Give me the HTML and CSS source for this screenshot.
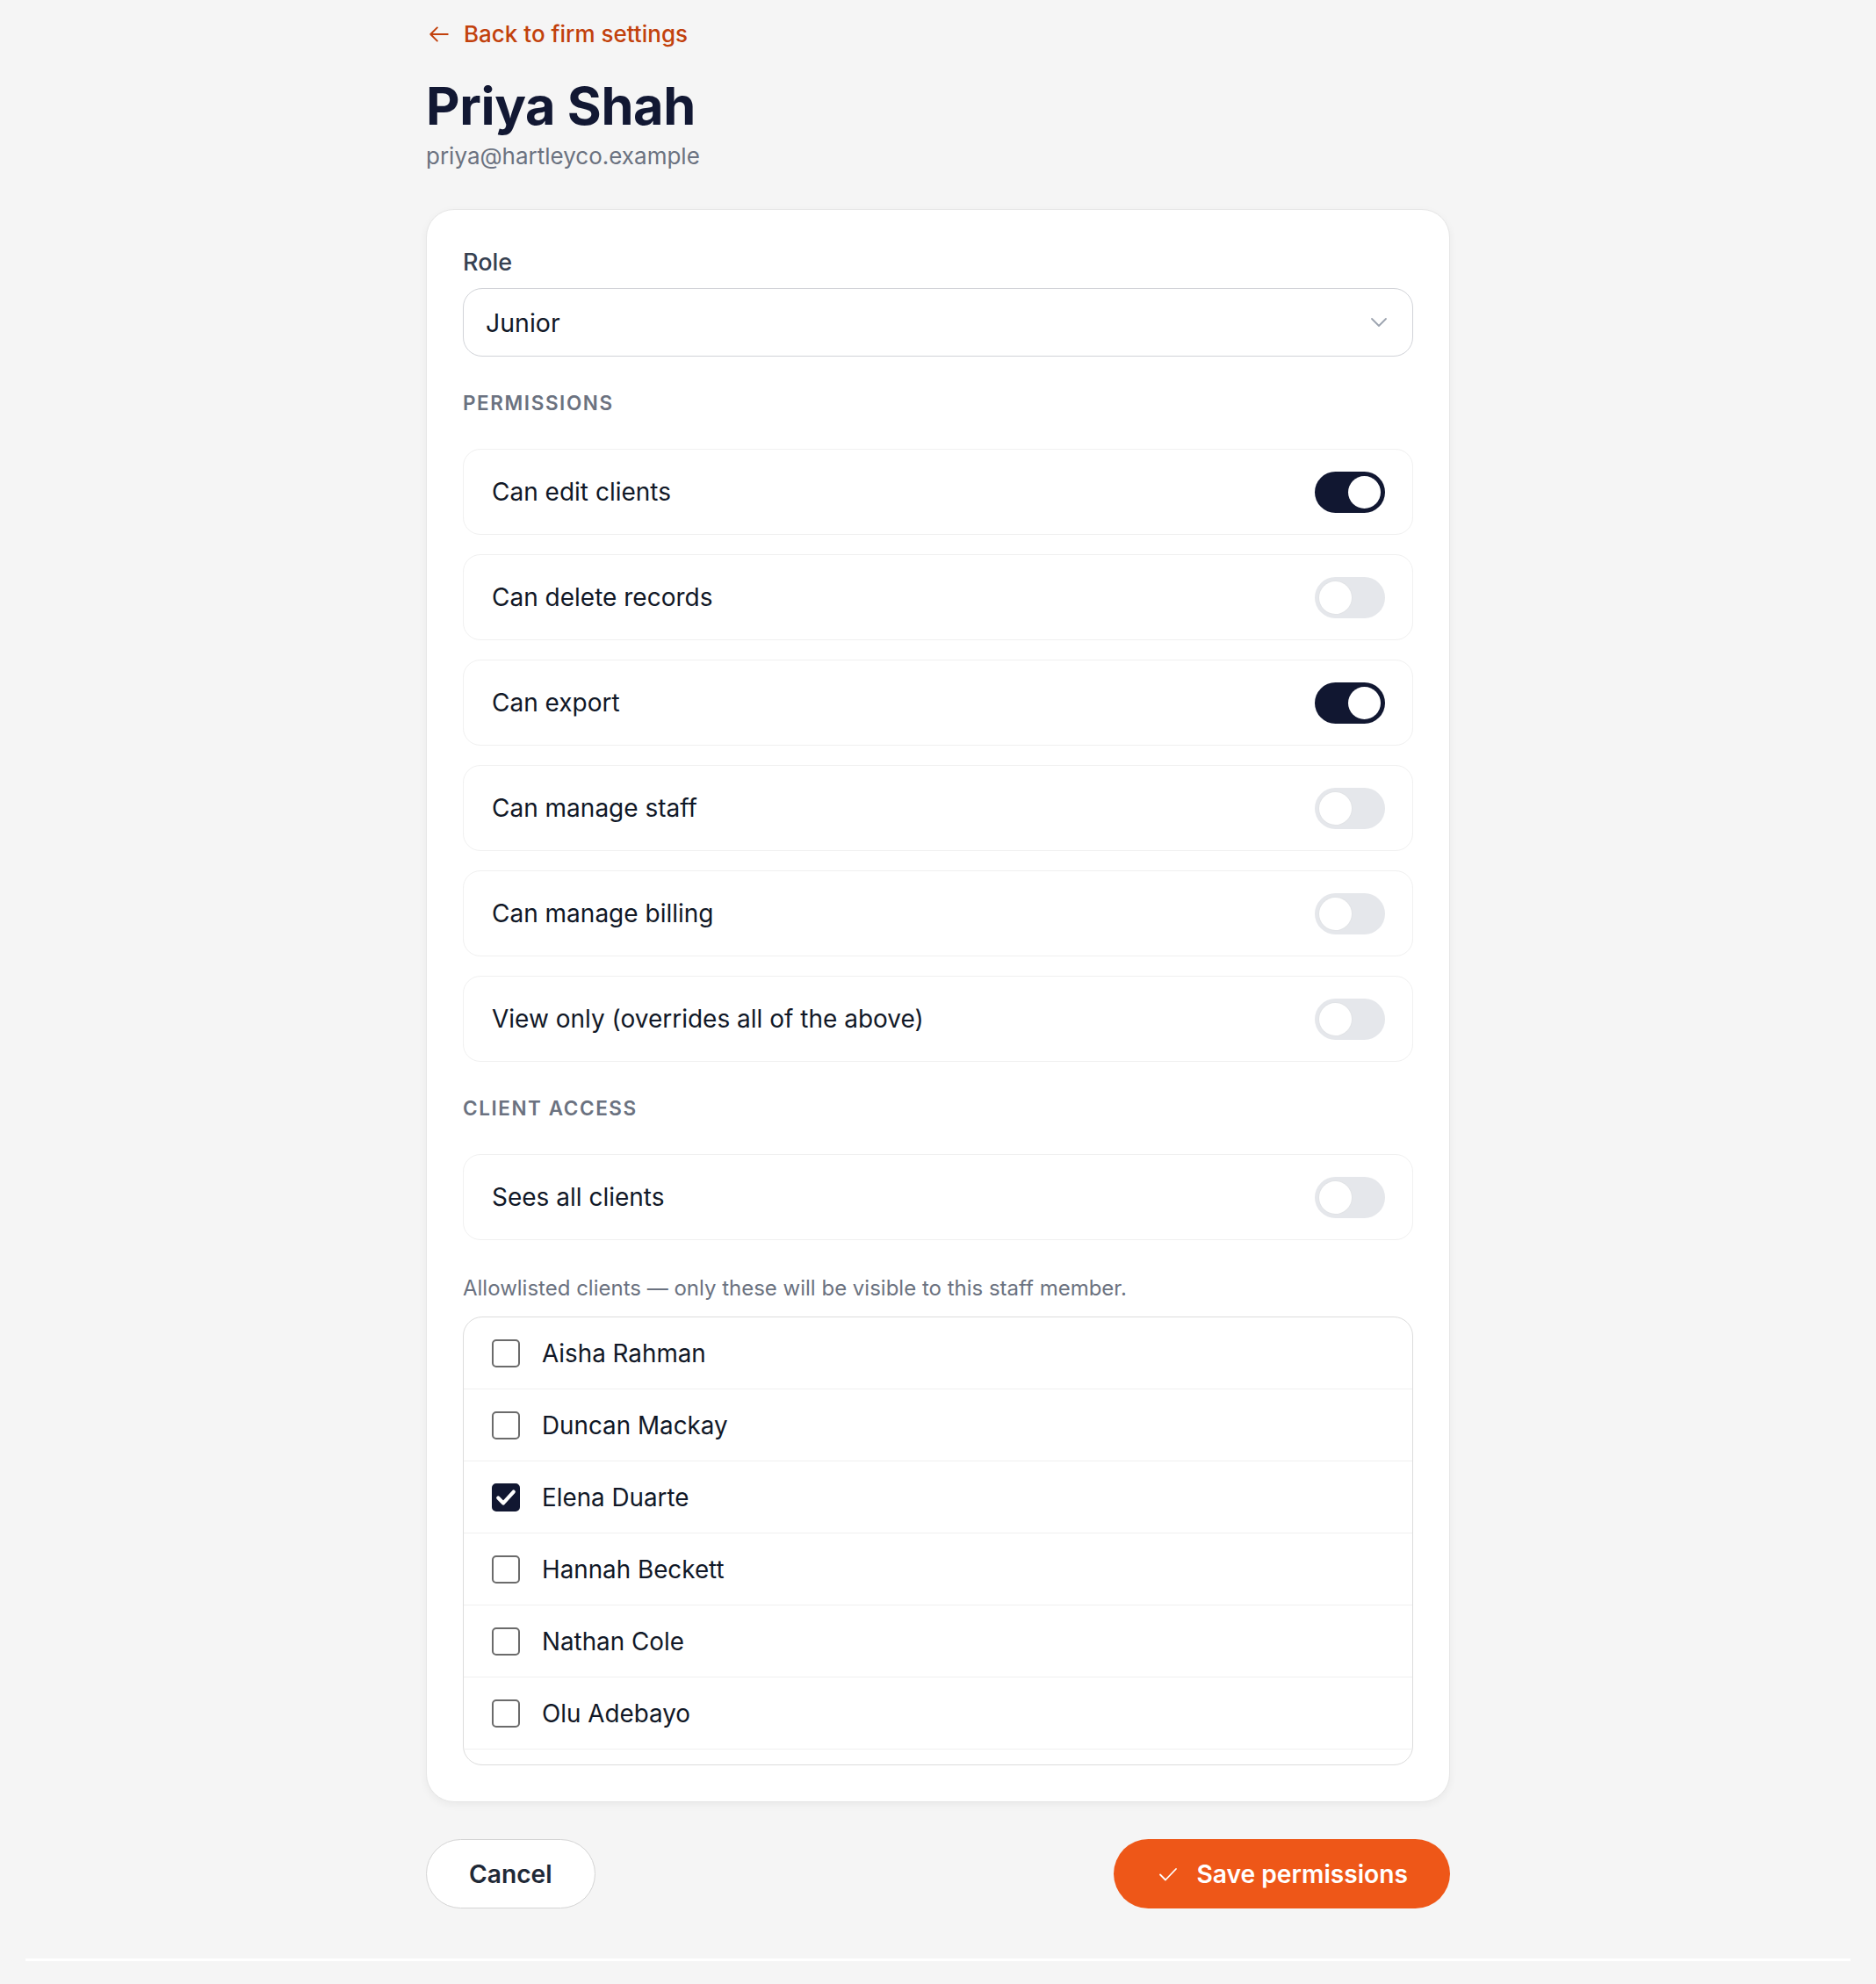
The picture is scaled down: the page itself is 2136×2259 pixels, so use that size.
FILE: index.html
```html
<!DOCTYPE html>
<html lang="en">
<head>
<meta charset="utf-8">
<title>Priya Shah — Permissions</title>
<link rel="stylesheet" href="styles.css">
</head>
<body>
<main class="page">
  <a class="back" href="#">
    <svg class="back-icon" viewBox="0 0 24 24" width="24" height="24" aria-hidden="true"><path d="M21 12H3M10 5l-7 7 7 7" fill="none" stroke="currentColor" stroke-width="1.8" stroke-linecap="round" stroke-linejoin="round"/></svg>
    <span>Back to firm settings</span>
  </a>
  <h1 class="title">Priya Shah</h1>
  <p class="email">priya@hartleyco.example</p>

  <section class="card">
    <label class="field-label">Role</label>
    <div class="select">
      <span>Junior</span>
      <svg class="chevron" viewBox="0 0 20 12" width="20" height="12" aria-hidden="true"><path d="M2 2l8 8 8-8" fill="none" stroke="currentColor" stroke-width="1.8" stroke-linecap="round" stroke-linejoin="round"/></svg>
    </div>

    <h2 class="section-label">PERMISSIONS</h2>
    <div class="rows">
      <div class="row"><span>Can edit clients</span><span class="toggle on"><span class="knob"></span></span></div>
      <div class="row"><span>Can delete records</span><span class="toggle"><span class="knob"></span></span></div>
      <div class="row"><span>Can export</span><span class="toggle on"><span class="knob"></span></span></div>
      <div class="row"><span>Can manage staff</span><span class="toggle"><span class="knob"></span></span></div>
      <div class="row"><span>Can manage billing</span><span class="toggle"><span class="knob"></span></span></div>
      <div class="row"><span>View only (overrides all of the above)</span><span class="toggle"><span class="knob"></span></span></div>
    </div>

    <h2 class="section-label">CLIENT ACCESS</h2>
    <div class="rows">
      <div class="row"><span>Sees all clients</span><span class="toggle"><span class="knob"></span></span></div>
    </div>

    <p class="hint">Allowlisted clients — only these will be visible to this staff member.</p>
    <ul class="client-list">
      <li class="client"><span class="checkbox"></span><span>Aisha Rahman</span></li>
      <li class="client"><span class="checkbox"></span><span>Duncan Mackay</span></li>
      <li class="client"><span class="checkbox checked"><svg viewBox="0 0 24 24" width="28" height="28" aria-hidden="true"><path d="M4.5 12.5l5 5L19.5 6.5" fill="none" stroke="#fff" stroke-width="3.6" stroke-linecap="round" stroke-linejoin="round"/></svg></span><span>Elena Duarte</span></li>
      <li class="client"><span class="checkbox"></span><span>Hannah Beckett</span></li>
      <li class="client"><span class="checkbox"></span><span>Nathan Cole</span></li>
      <li class="client"><span class="checkbox"></span><span>Olu Adebayo</span></li>
    </ul>
  </section>

  <div class="actions">
    <button class="btn btn-cancel" type="button">Cancel</button>
    <button class="btn btn-save" type="button">
      <svg viewBox="0 0 24 24" width="24" height="24" aria-hidden="true"><path d="M3 12.5l6 6L21 6" fill="none" stroke="currentColor" stroke-width="1.8" stroke-linecap="round" stroke-linejoin="round"/></svg>
      <span>Save permissions</span>
    </button>
  </div>
</main>
<div class="footer-line"></div>
</body>
</html>
```

FILE: styles.css
```css
* { box-sizing: border-box; }

html, body {
  margin: 0;
  padding: 0;
  background: #f5f5f5;
  font-family: Inter, "Noto Sans", "Liberation Sans", sans-serif;
  color: #111827;
}

.page {
  width: 1166px;
  margin: 0 auto;
  padding-top: 21px;
}

.back {
  display: flex;
  align-items: center;
  gap: 15px;
  height: 36px;
  color: #c2410c;
  text-decoration: none;
  font-size: 26px;
  font-weight: 500;
  line-height: 36px;
}
.back-icon { width: 26px; height: 26px; margin-left: 2px; }

.title {
  margin: 27px 0 0;
  font-size: 59.5px;
  line-height: 72px;
  font-weight: 700;
  color: #121833;
  letter-spacing: -0.4px;
}

.email {
  margin: 4px 0 0;
  font-size: 26px;
  line-height: 36px;
  color: #6b7280;
}

.card {
  margin-top: 42px;
  background: #fff;
  border: 1.5px solid #e6e6e6;
  border-radius: 32px;
  padding: 41px;
  box-shadow: 0 3px 10px rgba(0, 0, 0, 0.05);
}

.field-label {
  display: block;
  font-size: 27px;
  line-height: 36px;
  font-weight: 500;
  color: #374151;
  margin-top: 1px;
}

.select {
  margin-top: 11px;
  height: 78px;
  border: 1.5px solid #d1d3d8;
  border-radius: 22px;
  display: flex;
  align-items: center;
  justify-content: space-between;
  padding: 0 28px 0 25px;
  font-size: 28.5px;
  color: #111827;
}
.chevron { color: #9ca3af; }

.section-label {
  margin: 38px 0 0;
  font-size: 22.5px;
  line-height: 30px;
  font-weight: 600;
  letter-spacing: 0.07em;
  color: #6b7280;
}

.rows {
  margin-top: 37px;
  display: flex;
  flex-direction: column;
  gap: 22px;
}

.row {
  height: 98px;
  border: 1.5px solid #f0f0f0;
  border-radius: 20px;
  display: flex;
  align-items: center;
  justify-content: space-between;
  padding: 0 31px 0 32px;
  font-size: 28px;
  color: #111827;
}

.toggle {
  position: relative;
  width: 80px;
  height: 47px;
  border-radius: 24px;
  background: #e5e7eb;
  flex: none;
}
.toggle .knob {
  position: absolute;
  top: 5px;
  left: 5px;
  width: 37px;
  height: 37px;
  border-radius: 50%;
  background: #fff;
  box-shadow: 0 0 0 1px #e1e3e6;
}
.toggle.on { background: #111731; }
.toggle.on .knob { left: 38px; box-shadow: none; }

.hint {
  margin: 40px 0 0;
  font-size: 24px;
  line-height: 30px;
  color: #6b7280;
}

.client-list {
  list-style: none;
  margin: 17px 0 0;
  padding: 0 0 17px;
  border: 1.5px solid #dcdcdc;
  border-radius: 22px;
}

.client {
  height: 82px;
  border-bottom: 1.5px solid #f0f0f0;
  display: flex;
  align-items: center;
  gap: 25px;
  padding-left: 32px;
  font-size: 27.8px;
  color: #111827;
}

.checkbox {
  width: 32px;
  height: 32px;
  border: 2px solid #6b6b6b;
  border-radius: 5px;
  background: #fff;
  display: flex;
  align-items: center;
  justify-content: center;
  flex: none;
}
.checkbox.checked {
  background: #111731;
  border-color: #111731;
}

.actions {
  margin-top: 42px;
  display: flex;
  justify-content: space-between;
  align-items: center;
}

.btn {
  height: 79px;
  border-radius: 40px;
  font-family: Inter, "Noto Sans", "Liberation Sans", sans-serif;
  font-size: 28.2px;
  font-weight: 600;
  display: flex;
  align-items: center;
  cursor: pointer;
}

.btn-cancel {
  background: #fff;
  border: 1.5px solid #d4d4d4;
  color: #1f2937;
  padding: 0 48px;
}

.btn-save {
  background: #ee5718;
  border: none;
  color: #fff;
  padding: 0 48px 0 50px;
  gap: 20px;
}

.footer-line {
  margin: 57px 29px 0;
  border-top: 3px solid #ffffff;
  height: 26px;
}
```
